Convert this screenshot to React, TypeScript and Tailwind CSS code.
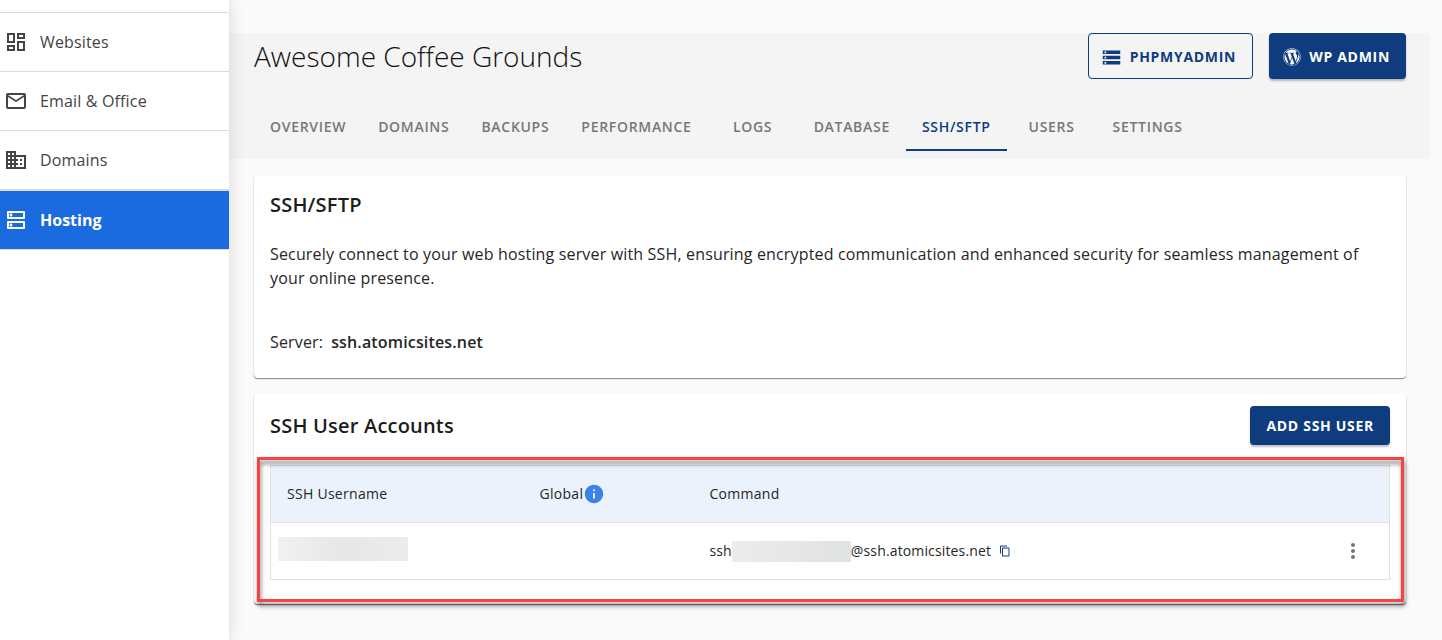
import type { ReactNode } from "react";
import {
  MdContentCopy,
  MdDomain,
  MdInfo,
  MdMoreVert,
  MdOutlineDashboard,
  MdOutlineDns,
  MdOutlineMail,
  MdStorage,
} from "react-icons/md";
import { FaWordpress } from "react-icons/fa";

type NavItem = { label: string; icon: ReactNode; active?: boolean };

const navItems: NavItem[] = [
  { label: "Websites", icon: <MdOutlineDashboard size={24} /> },
  { label: "Email & Office", icon: <MdOutlineMail size={24} /> },
  { label: "Domains", icon: <MdDomain size={24} /> },
  { label: "Hosting", icon: <MdOutlineDns size={24} />, active: true },
];

const tabs = [
  "Overview",
  "Domains",
  "Backups",
  "Performance",
  "Logs",
  "Database",
  "SSH/SFTP",
  "Users",
  "Settings",
];

const activeTab = "SSH/SFTP";

function Sidebar() {
  return (
    <aside className="relative z-10 w-[229px] shrink-0 bg-white pt-3 shadow-[0_0_16px_rgba(0,0,0,0.14)]">
      <nav aria-label="Main">
        <ul>
          {navItems.map((item) => (
            <li key={item.label} className="border-t border-[#dcdcdc] last:border-b">
              <a
                href="#"
                aria-current={item.active ? "page" : undefined}
                className={
                  item.active
                    ? "flex h-[59px] items-center gap-3 border-t border-[#dcdcdc] bg-[#1a6be0] pl-1 font-bold text-white"
                    : "flex h-[58px] items-center gap-3 pl-1 tracking-[0.01em] text-[#444444]"
                }
              >
                {item.icon}
                {item.label}
              </a>
            </li>
          ))}
        </ul>
      </nav>
    </aside>
  );
}

function SiteHeader() {
  return (
    <header className="mr-3 bg-[#f4f4f4] pr-6 pl-[25px]">
      <div className="flex h-[70px] items-start justify-between">
        <h1 className="text-[28px] leading-[46px] font-light text-[#111111]">
          Awesome Coffee Grounds
        </h1>
        <div className="flex gap-4 text-sm font-bold tracking-wider">
          <button
            type="button"
            className="flex h-[46px] items-center gap-2 rounded border border-[#0e3c7e] pt-0.5 pr-4 pl-3 text-[#0e3c7e]"
          >
            <MdStorage size={21} />
            PHPMYADMIN
          </button>
          <button
            type="button"
            className="flex h-[46px] items-center gap-2 rounded bg-[#0e3c7e] pt-0.5 pr-4 pl-3.5 text-white shadow-[0_2px_2px_rgba(0,0,0,0.25)]"
          >
            <FaWordpress size={18} />
            WP ADMIN
          </button>
        </div>
      </div>
      <div role="tablist" className="flex pb-2">
        {tabs.map((tab) => (
          <button
            key={tab}
            type="button"
            role="tab"
            aria-selected={tab === activeTab}
            className={
              tab === activeTab
                ? "h-12 min-w-[90px] border-b-2 border-[#0e3c7e] px-4 pt-0.5 text-sm font-semibold tracking-wider text-[#0e3c7e] uppercase"
                : "h-12 min-w-[90px] border-b-2 border-transparent px-4 pt-0.5 text-sm font-semibold tracking-wider text-[#777777] uppercase"
            }
          >
            {tab}
          </button>
        ))}
      </div>
    </header>
  );
}

function ServerCard() {
  return (
    <section className="rounded bg-white px-4 pt-4 pb-6 shadow-[0_1px_1px_rgba(0,0,0,0.4),0_1px_2px_rgba(0,0,0,0.12)]">
      <h2 className="text-xl leading-7 font-semibold tracking-[0.01em] text-[#1c1c1c]">SSH/SFTP</h2>
      <p className="mt-[23px] leading-6 tracking-[0.01em]">
        Securely connect to your web hosting server with SSH, ensuring encrypted communication and
        enhanced security for seamless management of your online presence.
      </p>
      <p className="mt-10 flex gap-2 leading-6 tracking-[0.01em]">
        <span>Server:</span>
        <span className="font-semibold">ssh.atomicsites.net</span>
      </p>
    </section>
  );
}

function AccountsCard() {
  return (
    <section className="relative rounded bg-white px-4 pt-3 pb-6 shadow-[0_1px_1px_rgba(0,0,0,0.5),0_1px_2px_rgba(0,0,0,0.12)]">
      <div className="mb-5 flex items-center justify-between">
        <h2 className="text-xl leading-7 font-semibold tracking-[0.01em] text-[#1c1c1c]">
          SSH User Accounts
        </h2>
        <button
          type="button"
          className="h-[39px] rounded bg-[#0e3c7e] px-4 text-sm font-bold tracking-wider text-white shadow-[0_2px_2px_rgba(0,0,0,0.25)]"
        >
          ADD SSH USER
        </button>
      </div>
      <table className="w-full table-fixed border border-[#e0e0e0] text-left text-sm">
        <thead>
          <tr className="h-[57px] border-b border-[#e0e0e0] bg-[#ebf2fc] tracking-[0.02em]">
            <th className="w-[253px] pl-4 font-normal">SSH Username</th>
            <th className="w-[170px] pl-4 font-normal">
              <span className="flex items-center">
                Global
                <MdInfo size={22} className="text-[#3b82e8]" />
              </span>
            </th>
            <th className="pl-4 font-normal">Command</th>
            <th className="w-[73px]" aria-label="Actions" />
          </tr>
        </thead>
        <tbody>
          <tr className="h-[57px] tracking-[0.01em]">
            <td className="pb-1 pl-[7px]">
              <div className="h-6 w-[130px] bg-linear-to-r from-[#f1f1f1] via-[#e6e7e6] to-[#ececee]" />
            </td>
            <td />
            <td className="pl-4">
              <div className="flex items-center">
                ssh
                <span className="h-[21px] w-[119px] bg-linear-to-r from-[#ececec] to-[#e1e2e2]" />
                @ssh.atomicsites.net
                <button type="button" aria-label="Copy command" className="ml-2 text-[#0e3c7e]">
                  <MdContentCopy size={12} />
                </button>
              </div>
            </td>
            <td>
              <button
                type="button"
                aria-label="More options"
                className="ml-6 flex text-[#757575]"
              >
                <MdMoreVert size={24} />
              </button>
            </td>
          </tr>
        </tbody>
      </table>
      <div className="pointer-events-none absolute top-[63px] right-0.5 bottom-0.5 left-[3px] border-[3px] border-[#fb4141] drop-shadow-[1px_4px_2px_rgba(0,0,0,0.5)]" />
    </section>
  );
}

export default function App() {
  return (
    <div className="flex min-h-screen bg-[#fafafa] font-['Open_Sans',sans-serif] text-base text-[#262626]">
      <Sidebar />
      <main className="min-w-0 flex-1 pt-[33px]">
        <SiteHeader />
        <div className="flex flex-col gap-4 py-4 pr-9 pl-[25px]">
          <ServerCard />
          <AccountsCard />
        </div>
      </main>
    </div>
  );
}
